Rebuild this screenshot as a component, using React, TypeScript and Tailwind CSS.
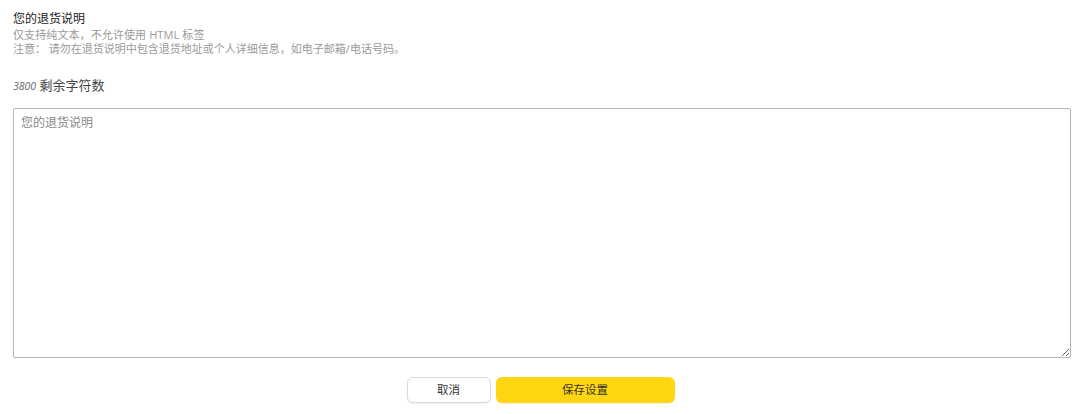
import React, { useState } from 'react';

const MAX = 3800;

const App: React.FC = () => {
  const [text, setText] = useState('');

  return (
    <div
      className="w-[1080px] h-[414px] bg-white px-[13px] pt-[11px] text-[#333]"
      style={{ fontFamily: '"Open Sans", "Noto Sans CJK SC", sans-serif' }}
    >
      <h3 className="text-[12px] leading-[16px] font-normal text-[#1a1a1a]">您的退货说明</h3>
      <p className="mt-[1px] text-[11px] leading-[14px] tracking-[0.1px] text-[#9a9a9a]">仅支持纯文本，不允许使用 HTML 标签</p>
      <p className="text-[11px] leading-[14px] text-[#9a9a9a]">
        注意： 请勿在退货说明中包含退货地址或个人详细信息，如电子邮箱/电话号码。
      </p>

      <div className="mt-[21px] text-[13px] leading-[16px] text-[#444]">
        <span className="italic text-[10.5px] text-[#666]">{MAX - text.length}</span> 剩余字符数
      </div>

      <textarea
        value={text}
        maxLength={MAX}
        onChange={(e) => setText(e.target.value)}
        placeholder="您的退货说明"
        className="mt-[14px] block w-[1058px] h-[250px] border border-[#b5b5b5] rounded-[2px] px-[7px] py-[6px] text-[12px] leading-[16px] outline-none placeholder:text-[#888] resize-y"
      />

      <div className="mt-[19px] flex justify-center gap-[5px] pl-[1px]">
        <button className="w-[84px] h-[26px] rounded-[6px] border border-[#d9d9d9] bg-white text-[11.5px] text-[#333] shadow-[0_1px_2px_rgba(0,0,0,0.06)]">
          取消
        </button>
        <button className="w-[179px] h-[26px] rounded-[6px] bg-[#ffd60f] text-[11.5px] text-[#333] shadow-[0_1px_2px_rgba(0,0,0,0.06)]">
          保存设置
        </button>
      </div>
    </div>
  );
};

export default App;
